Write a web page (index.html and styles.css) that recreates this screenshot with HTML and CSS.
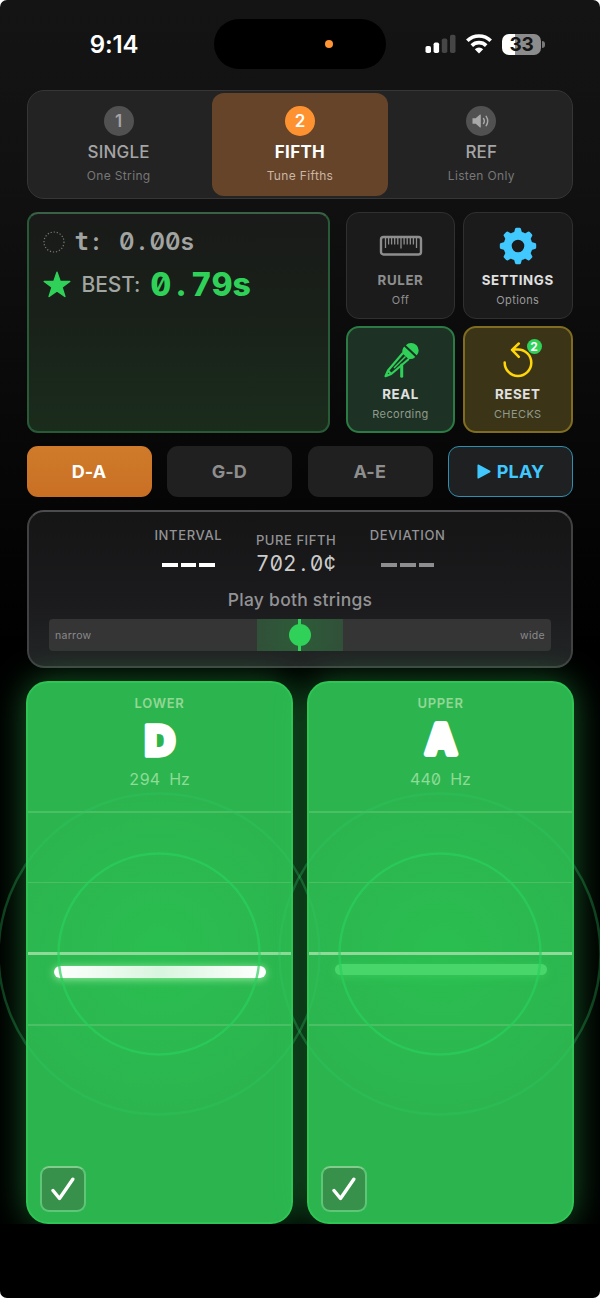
FILE: index.html
```html
<!DOCTYPE html>
<html lang="en">
<head>
<meta charset="utf-8">
<title>Fifth Tuner</title>
<link rel="stylesheet" href="styles.css">
</head>
<body>
<div class="screen">
  <header class="status">
    <div class="clock">9:14</div>
    <div class="island"><i class="mic-dot"></i></div>
    <div class="indicators">
      <svg class="signal" width="31" height="20" viewBox="0 0 31 20"><g fill="#fff"><rect x="0.5" y="12" width="5.5" height="7" rx="1.8"/><rect x="8.6" y="8.5" width="5.500" height="10.5" rx="1.8"/></g><g fill="#464646"><rect x="16.8" y="4.5" width="5.5" height="14.5" rx="1.8"/><rect x="25" y="0.8" width="5.5" height="18.2" rx="1.8"/></g></svg>
      <svg class="wifi" width="26" height="20" viewBox="0 0 26 20"><g fill="none" stroke="#fff" stroke-width="3.6"><path d="M1.3 6.8a16.6 16.6 0 0 1 23.4 0"/><path d="M5.8 11.6a10.3 10.3 0 0 1 14.4 0"/></g><path fill="#fff" d="M13 19.5l-4.2-4.2a6 6 0 0 1 8.4 0z"/></svg>
      <div class="battery"><span>33</span></div><i class="nub"></i>
    </div>
  </header>

  <main class="content">
    <nav class="modes">
      <div class="mode"><span class="num">1</span><b>SINGLE</b><small>One String</small></div>
      <div class="mode active"><span class="num">2</span><b>FIFTH</b><small>Tune Fifths</small></div>
      <div class="mode"><span class="num"><svg width="18" height="14" viewBox="0 0 18 14"><path fill="#a9a9a9" d="M.5 4.2h3.2L8 .6q.8-.5.8.5v11.8q0 1-.8.5L3.7 9.8H.5z"/><path fill="none" stroke="#a9a9a9" stroke-width="1.4" stroke-linecap="round" d="M11.5 4.5q1.7 2.500 0 5M14.200 2.300q3 4.700 0 9.400"/></svg></span><b>REF</b><small>Listen Only</small></div>
    </nav>

    <section class="dash">
      <div class="timer">
        <div class="time-row"><svg width="22" height="22" viewBox="0 0 22 22"><circle cx="11" cy="11" r="10" fill="none" stroke="#777" stroke-width="1.2" stroke-dasharray="1.2 1.9"/></svg><span class="mono now"><i class="t">t</i><i>:</i><i> </i>0<i>.</i>00s</span></div>
        <div class="best-row"><svg width="28" height="27" viewBox="0 0 28 27"><path fill="#30d158" stroke="#30d158" stroke-width="1.4" stroke-linejoin="round" d="M14 1.200l3.100 9.100 9.700.1-7.800 5.800 2.900 9.300L14 19.900l-7.900 5.600L9 16.200 1.200 10.400l9.700-.1z"/></svg><span class="best-label">BEST:</span><span class="mono best">0<i>.</i>79s</span></div>
      </div>
      <div class="tiles">
        <div class="tile ruler">
          <svg width="44" height="34" viewBox="0 0 44 34"><rect x="2" y="8" width="40" height="17.500" rx="2.500" fill="none" stroke="#8e8e8e" stroke-width="2.400"/><path stroke="#8e8e8e" stroke-width="1.300" d="M6.500 9v10M9.600 9v6.500M12.600 9v6.500M15.700 9v6.500M18.800 9v6.500M22 9v10.500M25.100 9v6.500M28.200 9v6.500M31.300 9v6.500M34.400 9v6.500M37.500 9v10"/></svg>
          <b>RULER</b><small>Off</small>
        </div>
        <div class="tile settings">
          <svg width="38" height="38" viewBox="-19 -19 38 38"><defs><path id="tooth" d="M-4.200-12.500L-3-17q.3-1.200 1.500-1.200h3Q2.700-18.200 3-17l1.200 4.500z"/></defs><g fill="#40c8ff"><circle r="10.400" fill="none" stroke="#40c8ff" stroke-width="8.200"/><use href="#tooth"/><use href="#tooth" transform="rotate(45)"/><use href="#tooth" transform="rotate(90)"/><use href="#tooth" transform="rotate(135)"/><use href="#tooth" transform="rotate(180)"/><use href="#tooth" transform="rotate(225)"/><use href="#tooth" transform="rotate(270)"/><use href="#tooth" transform="rotate(315)"/></g></svg>
          <b>SETTINGS</b><small>Options</small>
        </div>
        <div class="tile real">
          <svg width="36" height="36" viewBox="0 0 36 36"><g fill="#30d158"><path d="M22.800 3.200a7.500 7.500 0 0 1 10.900 10.300z"/><path d="M21.300 4.600l11 10.300a7.500 7.500 0 0 1-6.800 2l-6-5.500a7.500 7.500 0 0 1 1.800-6.800z"/></g><path stroke="#1d3224" stroke-width="1.300" d="M21.800 3.600l11.800 11"/><path fill="none" stroke="#30d158" stroke-width="2.200" stroke-linejoin="round" stroke-linecap="round" d="M19.500 11.500L5 28.500l-2.500 5.700 5.700-2.200 17-14.500M5 28.500l3.200 3.500"/><path stroke="#30d158" stroke-width="1.500" d="M22.500 14.500L11 26"/><path stroke="#30d158" stroke-width="3" stroke-linecap="round" d="M18.700 23v11.300"/></svg>
          <b>REAL</b><small>Recording</small>
        </div>
        <div class="tile reset">
          <svg width="30" height="36" viewBox="0 0 30 36"><path fill="none" stroke="#ffd60a" stroke-width="2.500" stroke-linecap="round" stroke-linejoin="round" d="M1.700 20.500a13.300 13.300 0 1 0 13.300-13.100h-5.500M15.800 1.500L9 7.800l6.800 7"/></svg>
          <span class="count">2</span>
          <b>RESET</b><small>CHECKS</small>
        </div>
      </div>
    </section>

    <section class="pairs">
      <div class="pair on">D-A</div>
      <div class="pair">G-D</div>
      <div class="pair">A-E</div>
      <div class="pair play"><svg width="14" height="15" viewBox="0 0 14 15"><path fill="#40c8ff" stroke="#40c8ff" stroke-width="1.500" stroke-linejoin="round" d="M1.200 1.200l11.600 6.300-11.600 6.300z"/></svg>PLAY</div>
    </section>

    <section class="interval">
      <div class="readouts">
        <div class="readout"><span>INTERVAL</span><div class="dashes"><i></i><i></i><i></i></div></div>
        <div class="readout pure"><span>PURE FIFTH</span><div class="mono cents">702<i>.</i>0<i>¢</i></div></div>
        <div class="readout dim"><span>DEVIATION</span><div class="dashes"><i></i><i></i><i></i></div></div>
      </div>
      <div class="hint">Play both strings</div>
      <div class="meter"><span>narrow</span><div class="zone"><i></i></div><span>wide</span></div>
    </section>

    <section class="strings">
      <article class="string">
        <div class="rings"><svg width="330" height="330" viewBox="-165 -165 330 330"><circle class="inner" r="100.500"/><circle class="outer" r="160.500"/></svg></div>
        <h2>LOWER</h2>
        <svg class="note" width="60" height="54" viewBox="0 0 60 54"><text class="letter d" x="30" y="42.500">D</text></svg>
        <div class="mono hz">294<i> </i>Hz</div>
        <div class="lanes"><i></i><i></i><i class="mid"></i><i></i></div>
        <div class="bar bright"></div>
        <div class="check"><svg width="24" height="24" viewBox="0 0 24 24"><path fill="none" stroke="#fff" stroke-width="3.400" stroke-linecap="round" stroke-linejoin="round" d="M2 13.500l6.500 8L21.800 2.200"/></svg></div>
      </article>
      <article class="string">
        <div class="rings"><svg width="330" height="330" viewBox="-165 -165 330 330"><circle class="inner" r="100.500"/><circle class="outer" r="160.500"/></svg></div>
        <h2>UPPER</h2>
        <svg class="note" width="60" height="54" viewBox="0 0 60 54"><text class="letter a" x="30" y="41">A</text></svg>
        <div class="mono hz">440<i> </i>Hz</div>
        <div class="lanes"><i></i><i></i><i class="mid"></i><i></i></div>
        <div class="bar"></div>
        <div class="check"><svg width="24" height="24" viewBox="0 0 24 24"><path fill="none" stroke="#fff" stroke-width="3.400" stroke-linecap="round" stroke-linejoin="round" d="M2 13.500l6.500 8L21.800 2.200"/></svg></div>
      </article>
    </section>
  </main>
</div>
</body>
</html>
```
FILE: styles.css
```css
* { box-sizing: border-box; }
body { margin: 0; background: #fff; font-family: Inter, "Liberation Sans", sans-serif; color: #fff; }
i { font-style: normal; }
svg { display: block; flex: none; }
.screen { height: 1298px; overflow: hidden; border-radius: 7px; background: linear-gradient(#141414 0, #111 180px, #000 650px); }

/* Status bar */
.status { height: 90px; display: grid; grid-template-columns: 214px 172px 214px; align-items: start; padding-top: 19px; }
.clock { padding-left: 14px; text-align: center; font-size: 24px; font-weight: 600; line-height: 51px; letter-spacing: -.1px; }
.island { height: 50px; border-radius: 25px; background: #000; display: flex; align-items: center; padding-left: 111px; }
.mic-dot { width: 8px; height: 8px; border-radius: 50%; background: #ff9535; }
.indicators { height: 50px; display: flex; align-items: center; padding-left: 39px; }
.wifi { margin-left: 10px; }
.battery { width: 39px; height: 21px; margin-left: 10px; border-radius: 7px; background: linear-gradient(90deg, #fff 13px, #8c8c8c 13px); text-align: center; color: #151515; font-size: 19px; font-weight: 700; line-height: 21px; letter-spacing: -.3px; }
.nub { width: 2.500px; height: 7px; margin-left: 1px; border-radius: 0 3px 3px 0; background: #777; }

.content { padding: 0 27px; display: flex; flex-direction: column; gap: 13px; }

/* Mode switch */
.modes { height: 109px; display: grid; grid-template-columns: repeat(3, 1fr); padding: 2px 0; border: 1px solid #363636; border-radius: 17px; background: #232323; }
.mode { display: flex; flex-direction: column; align-items: center; margin: 0 3px; padding-top: 13px; border-radius: 12px; color: #a5a5a5; }
.mode.active { background: #65442a; color: #fff; }
.num { width: 30px; height: 30px; border-radius: 50%; background: #515151; display: grid; place-items: center; font-size: 17px; font-weight: 600; }
.active .num { background: #ff9230; }
.mode b { margin-top: 6px; font-size: 17px; line-height: 20px; font-weight: 500; letter-spacing: .2px; }
.mode.active b { font-weight: 700; letter-spacing: .3px; }
.mode small { margin-top: 6px; font-size: 12px; line-height: 16px; letter-spacing: .35px; color: #777; }
.mode.active small { color: #cbb6a5; }

/* Dashboard */
.dash { height: 221px; display: grid; grid-template-columns: 303px 227px; gap: 16px; }
.timer { border: 2px solid #285a37; border-top-color: #3a6045; border-radius: 11px; background: linear-gradient(#191a19, #192019 45%, #1a2c1c); padding: 12px 13.500px; }
.mono { font-feature-settings: "tnum", "zero"; white-space: nowrap; display: flex; align-items: baseline; }
.mono i { display: inline-block; text-align: center; }
.time-row { display: flex; align-items: center; height: 31px; gap: 10px; }
.now { font-size: 24px; font-weight: 600; color: #a1a4a1; }
.now i { width: 15.200px; }
.now .t { font-family: "DejaVu Sans Mono", monospace; font-weight: 700; width: 14px; line-height: 24px; }
.best-row { display: flex; align-items: center; height: 36px; margin-top: 9px; }
.best-label { margin-left: 11px; font-size: 21px; font-weight: 500; color: #a1a6a2; letter-spacing: -.1px; }
.best { margin-left: 10px; font-size: 32px; font-weight: 800; color: #30d158; }
.best i { width: 20px; }
.tiles { display: grid; grid-template-columns: 109px 109.500px; grid-template-rows: 107px 107px; gap: 7px 8px; }
.tile { position: relative; display: grid; grid-template-rows: 38px 19px 20px; justify-items: center; align-items: center; align-content: start; padding-top: 14px; row-gap: 6px; border: 1px solid #303030; border-radius: 13px; background: #1b1b1b; }
.tile b { font-size: 13.300px; font-weight: 700; letter-spacing: .6px; line-height: 18px; color: #e0e0e0; margin-top: -1px; }
.tile small { font-size: 11px; letter-spacing: .4px; color: #999; margin-top: -12.500px; }
.ruler b, .ruler small { color: #8e8e8e; }
.tile.real, .tile.reset { border-width: 2px; padding-top: 13px; }
.real { border-color: #2a7b44; background: #1d3224; }
.reset { border-color: #806d21; background: #3b3417; }
.count { position: absolute; top: 11px; left: 61.500px; width: 15px; height: 15px; border-radius: 50%; background: #30d158; font-size: 12px; line-height: 15px; font-weight: 700; text-align: center; }
.real small, .reset small { color: #8f9a8d; }

/* String pairs */
.pairs { height: 51px; display: grid; grid-template-columns: repeat(4, 1fr); gap: 15.500px; }
.pair { display: flex; align-items: center; justify-content: center; gap: 6px; border-radius: 11px; padding: 0 1px 1px 0; background: #202020; color: #8e8e8e; font-size: 18px; font-weight: 700; letter-spacing: .1px; }
.pair.on { background: linear-gradient(#cf7b2b, #c96f24); color: #fff; }
.pair.play { border: 1px solid #2f8fb0; color: #40c8ff; background: #1e2021; padding-right: 0; }

/* Interval panel */
.interval { height: 158px; border: 2px solid #414143; border-top-color: #4c4c4e; border-radius: 17px; background: linear-gradient(#151516, #1b1b1d 60%, #232526); padding: 13px 20px 0; }
.readouts { display: flex; justify-content: center; gap: 33.500px; height: 63px; }
.readout { display: flex; flex-direction: column; align-items: center; font-size: 13px; font-weight: 500; line-height: 20px; letter-spacing: .65px; color: #939395; }
.pure { padding-top: 5px; }
.pure span { letter-spacing: .55px; }
.cents { font-size: 21px; font-weight: 400; line-height: 28px; color: #ccc; letter-spacing: 0; }
.cents i { width: 13px; }
.dashes { display: flex; gap: 3px; margin-top: 17.500px; }
.dashes i { width: 15.700px; height: 4px; background: #fff; }
.dim .dashes i { background: #8e8e90; }
.hint { text-align: center; font-size: 17.500px; font-weight: 500; line-height: 24px; color: #939395; letter-spacing: .25px; }
.meter { margin-top: 7px; height: 32px; border-radius: 4px; background: #353536; display: flex; align-items: center; justify-content: space-between; padding: 0 6px; position: relative; font-size: 10.500px; letter-spacing: .3px; color: #8a8a8b; }
.zone { position: absolute; left: 207.500px; width: 86px; height: 32px; background: linear-gradient(90deg, #315039, #2d5b38 50%, #315039); display: grid; place-items: center; }
.zone::before { content: ""; grid-area: 1 / 1; width: 3px; height: 32px; background: #30d158; }
.zone i { grid-area: 1 / 1; width: 22px; height: 22px; border-radius: 50%; background: #30d158; }

/* String cards */
.strings { margin: 0 -27px; padding: 0 26px; display: grid; grid-template-columns: 267px 267px; gap: 14px; height: 543px; clip-path: inset(-50px 0 0 0); }
.string { position: relative; border: 2px solid #2fc555; border-radius: 22px; background: radial-gradient(circle at 50% 50%, #2abe50, #2cb54f 160px); box-shadow: 0 0 34px rgba(48, 209, 88, .44); display: flex; flex-direction: column; align-items: center; padding-top: 10px; }
.string h2 { margin: 0; font-size: 13px; line-height: 20px; font-weight: 600; letter-spacing: .7px; color: #93d796; }
.letter { fill: #fff; stroke: #fff; stroke-linejoin: round; text-anchor: middle; font-weight: 900; }
.letter.d { font-size: 43px; stroke-width: 3.500px; }
.letter.a { font-size: 41px; stroke-width: 6px; font-weight: 700; }
.hz { font-size: 16px; line-height: 24px; color: #8fdb97; }
.hz i { width: 9px; }
.rings { position: absolute; z-index: 2; left: -34px; top: 105.500px; }
.rings circle { fill: none; stroke-width: 2.500; }
.inner { stroke: rgba(42, 206, 91, .7); }
.outer { stroke: rgba(45, 198, 100, .3); }
.lanes { align-self: stretch; height: 214.500px; margin-top: 20px; display: flex; flex-direction: column; justify-content: space-between; align-items: stretch; }
.lanes i { height: 1.500px; background: #4abf64; }
.lanes .mid { height: 3px; background: #8edb99; }
.bar { position: absolute; top: 281px; width: 212px; height: 11px; border-radius: 6px; background: #48d66b; box-shadow: 0 2px 10px rgba(65, 220, 100, .45); }
.bar.bright { top: 283px; height: 12px; background: linear-gradient(90deg, #fff, #d8f5de 50%, #fff); box-shadow: 0 1px 9px rgba(190, 255, 190, .75); }
.check { align-self: flex-start; margin: auto 0 10px 12px; width: 46px; height: 46px; border-radius: 9px; border: 2.500px solid #5fc677; border-top-color: #82cd8d; background: #37914b; display: grid; place-items: center; }
```
